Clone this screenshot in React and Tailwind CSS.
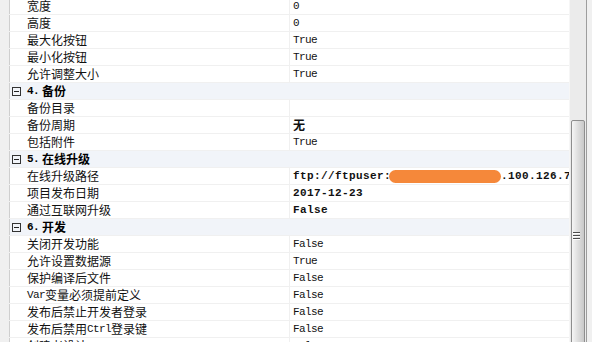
import React from 'react';

const mono = { fontFamily: '"Liberation Mono", "DejaVu Sans Mono", monospace' };
const cjk = { fontFamily: '"Noto Sans CJK SC", "Liberation Sans", sans-serif' };

const rows = [
    { name: '宽度', value: '0' },
    { name: '高度', value: '0' },
    { name: '最大化按钮', value: 'True' },
    { name: '最小化按钮', value: 'True' },
    { name: '允许调整大小', value: 'True' },
    { cat: '4.', title: '备份' },
    { name: '备份目录', value: '' },
    { name: '备份周期', value: '无', bold: true, cjkValue: true },
    { name: '包括附件', value: 'True' },
    { cat: '5.', title: '在线升级' },
    { name: '在线升级路径', ftp: true, bold: true },
    { name: '项目发布日期', value: '2017-12-23', bold: true },
    { name: '通过互联网升级', value: 'False', bold: true },
    { cat: '6.', title: '开发' },
    { name: '关闭开发功能', value: 'False' },
    { name: '允许设置数据源', value: 'True' },
    { name: '保护编译后文件', value: 'False' },
    { name: [['m', 'Var'], ['c', '变量必须提前定义']], value: 'False' },
    { name: '发布后禁止开发者登录', value: 'False' },
    { name: [['c', '发布后禁用'], ['m', 'Ctrl'], ['c', '登录键']], value: 'False' },
    { name: '创建者设计', value: 'False' },
];

function Name({ name }) {
    if (typeof name === 'string') return <span style={cjk}>{name}</span>;
    return name.map(([k, t], i) =>
        k === 'm'
            ? <span key={i} style={mono} className="text-[11px] tracking-[-0.6px]">{t}</span>
            : <span key={i} style={cjk}>{t}</span>
    );
}

function Value({ row }) {
    const cls = row.bold
        ? 'text-[11px] font-bold tracking-[0.4px]'
        : 'text-[11px] tracking-[-0.6px]';
    if (row.ftp) {
        return (
            <span className="flex items-center whitespace-nowrap">
                <span style={mono} className={cls}>ftp://ftpuser:</span>
                <span className="inline-block w-[112px] h-[13px] bg-[#f5883a] rounded-full -ml-[2px]"></span>
                <span style={mono} className={cls}>.100.126.70</span>
            </span>
        );
    }
    if (row.cjkValue) {
        return <span style={cjk} className="font-bold text-[12px]">{row.value}</span>;
    }
    return <span style={mono} className={cls}>{row.value}</span>;
}

function Row({ row }) {
    if (row.cat) {
        return (
            <div className="flex h-[17px] border-b border-[#f0f0f0]">
                <div className="w-[10px] bg-[#f0f0f0] border-r border-[#cfcfcf] shrink-0"></div>
                <div className="flex-1 flex items-center bg-[#f1f4f9]">
                    <span className="ml-[2px] w-[9px] h-[9px] border border-[#333] flex items-center justify-center">
                        <span className="w-[5px] h-px bg-[#222]"></span>
                    </span>
                    <span style={mono} className="ml-[6px] text-[11px] font-bold tracking-[-0.6px]">{row.cat}</span>
                    <span style={cjk} className="ml-[3px] text-[12px] font-bold">{row.title}</span>
                </div>
            </div>
        );
    }
    return (
        <div className="flex h-[17px] border-b border-[#f0f0f0]">
            <div className="w-[10px] bg-[#f0f0f0] border-r border-[#cfcfcf] shrink-0"></div>
            <div className="w-[279px] shrink-0 flex items-center pl-[17px] text-[12px] text-[#111] whitespace-nowrap overflow-hidden">
                <Name name={row.name} />
            </div>
            <div className="flex-1 min-w-0 flex items-center pl-[3px] border-l border-[#f0f0f0] text-[#111] overflow-hidden">
                <Value row={row} />
            </div>
        </div>
    );
}

export default function App() {
    return (
        <div className="w-[592px] h-[342px] flex bg-white overflow-hidden">
            <div className="w-[569px] h-[342px] overflow-hidden">
                <div className="-mt-[2px]">
                    {rows.map((r, i) => <Row key={i} row={r} />)}
                </div>
            </div>
            <div className="w-[23px] h-[342px] flex shrink-0">
                <div className="w-[17px] bg-[#ebebeb] border-l border-[#f6f6f6] flex flex-col pt-[120px] pl-[1px] pr-[1px]">
                    <div className="flex-1 -mb-[10px] border border-[#8e8e8e] rounded-[2px] bg-gradient-to-r from-[#f6f6f6] via-[#dedede] to-[#c9c9c9] flex flex-col items-center pt-[111px]">
                        <div className="flex flex-col gap-[2px] -ml-[3px]">
                            <span className="w-[7px] h-px bg-[#4d4d4d] shadow-[0_1px_0_#fff]"></span>
                            <span className="w-[7px] h-px bg-[#4d4d4d] shadow-[0_1px_0_#fff]"></span>
                            <span className="w-[7px] h-px bg-[#4d4d4d] shadow-[0_1px_0_#fff]"></span>
                        </div>
                    </div>
                </div>
                <div className="w-px bg-[#9d9d9d]"></div>
                <div className="flex-1 bg-[#f0f0f0]"></div>
            </div>
        </div>
    );
}
